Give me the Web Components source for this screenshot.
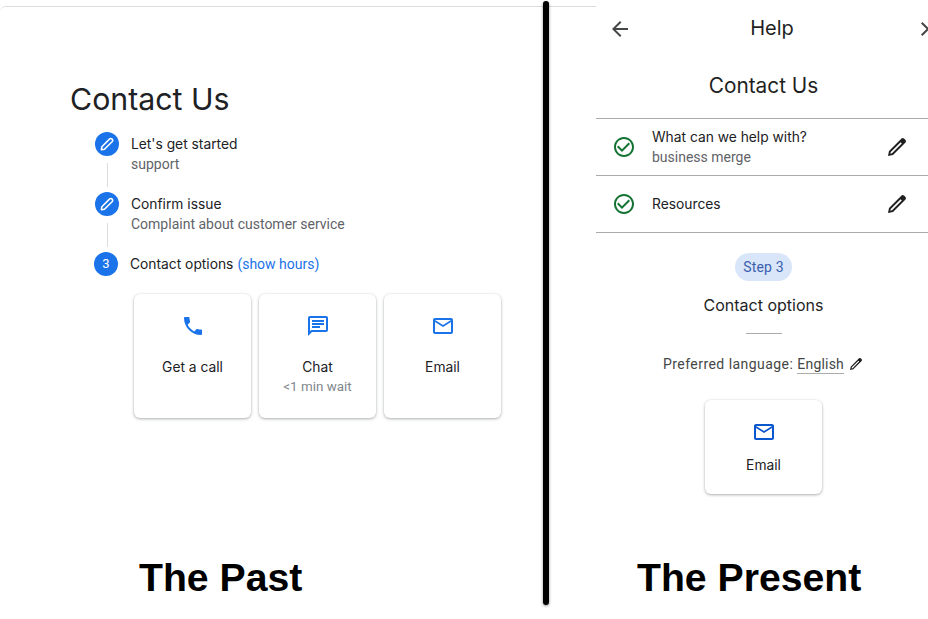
<!DOCTYPE html>
<html lang="en">
<head>
<meta charset="utf-8">
<title>Contact Us</title>
<style>
  html, body { margin: 0; background: #fff; }
</style>
</head>
<body>
<compare-page>
  <past-panel>
    <step-row marker="edit">
      <span slot="title">Let's get started</span>
      <span slot="sub">support</span>
    </step-row>
    <step-row marker="edit">
      <span slot="title">Confirm issue</span>
      <span slot="sub">Complaint about customer service</span>
    </step-row>
    <step-row marker="3" last>
      <span slot="title">Contact options</span>
      <span slot="extra">(show hours)</span>
    </step-row>
    <option-card slot="cards" icon="phone">Get a call</option-card>
    <option-card slot="cards" icon="chat">Chat<span slot="sub">&lt;1 min wait</span></option-card>
    <option-card slot="cards" icon="mail">Email</option-card>
  </past-panel>
  <present-panel>
    <done-row>What can we help with?<span slot="sub">business merge</span></done-row>
    <done-row>Resources</done-row>
  </present-panel>
</compare-page>

<script>
  const ICONS = {
    phone: 'M6.62 10.79c1.44 2.83 3.76 5.14 6.59 6.59l2.2-2.2c.27-.27.67-.36 1.02-.24 1.12.37 2.33.57 3.57.57.55 0 1 .45 1 1V20c0 .55-.45 1-1 1-9.39 0-17-7.61-17-17 0-.55.45-1 1-1h3.5c.55 0 1 .45 1 1 0 1.25.2 2.45.57 3.57.11.35.03.74-.25 1.02l-2.2 2.2z',
    chat: 'M20 2H4c-1.1 0-2 .9-2 2v18l4-4h14c1.1 0 2-.9 2-2V4c0-1.1-.9-2-2-2zm0 14H5.17L4 17.17V4h16v12zM6 12h8v2H6zM6 9h12v2H6zM6 6h12v2H6z',
    mail: 'M22 6c0-1.1-.9-2-2-2H4c-1.1 0-2 .9-2 2v12c0 1.1.9 2 2 2h16c1.1 0 2-.9 2-2V6zm-2 0l-8 5-8-5h16zm0 12H4V8l8 5 8-5v10z',
    pencil: 'M3 21L4 16 16.5 3.5Q17.7 2.4 19 3.5L20.5 5Q21.6 6.3 20.5 7.5L8 20ZM5.3 18.7L7 18.2 16.8 8.4 15.6 7.2 5.8 17Z',
    check: 'M16.59 7.58L10 14.17l-3.59-3.58L5 12l5 5 8-8zM12 2C6.48 2 2 6.48 2 12s4.48 10 10 10 10-4.48 10-10S17.52 2 12 2zm0 18c-4.42 0-8-3.58-8-8s3.58-8 8-8 8 3.58 8 8-3.58 8-8 8z',
    back: 'M20 11H7.83l5.59-5.59L12 4l-8 8 8 8 1.41-1.41L7.83 13H20v-2z',
    close: 'M19 6.41L17.59 5 12 10.59 6.41 5 5 6.41 10.59 12 5 17.59 6.41 19 12 13.41 17.59 19 19 17.59 13.41 12z'
  };

  const TITLE_FONT = 'Inter, "Liberation Sans", sans-serif';
  const BODY_FONT = 'Roboto, "Liberation Sans", sans-serif';

  function icon(name, size = 24) {
    return `<svg width="${size}" height="${size}" viewBox="0 0 24 24" fill="currentColor" fill-rule="evenodd" aria-hidden="true"><path d="${ICONS[name]}"/></svg>`;
  }

  // hollow white capsule used inside the blue step markers
  function capsule() {
    return `<svg width="18" height="18" viewBox="0 0 24 24" fill="none" stroke="currentColor" stroke-width="2.1" stroke-linejoin="round" aria-hidden="true"><path d="M4.5 19.5L5.2 15.6 15.6 5.2a2.5 2.5 0 0 1 3.5 3.5L8.6 19Z"/></svg>`;
  }

  class ComparePage extends HTMLElement {
    constructor() {
      super();
      this.attachShadow({ mode: 'open' }).innerHTML = `
        <style>
          :host { display: flex; position: relative; width: 928px; height: 619px; overflow: hidden; background: #fff; }
          .bar {
            position: absolute; left: 543px; top: 1px; width: 6px; height: 604px;
            background: #000; border-radius: 3px; box-shadow: 0 1px 3px rgba(0,0,0,.45);
          }
        </style>
        <slot></slot>
        <div class="bar"></div>
      `;
    }
  }

  class PastPanel extends HTMLElement {
    constructor() {
      super();
      this.attachShadow({ mode: 'open' }).innerHTML = `
        <style>
          :host { display: flex; flex-direction: column; flex: 0 0 596px; height: 619px; box-sizing: border-box; padding-top: 6px; }
          .sheet { border-top: 1px solid #dadce0; border-top-left-radius: 6px; padding-left: 70px; }
          h1 { margin: 74px 0 0; height: 51px; font: 400 30.3px/37px ${TITLE_FONT}; color: #202124; }
          .steps { display: flex; flex-direction: column; margin-left: 25px; }
          .cards { display: flex; gap: 8px; margin-left: 64px; }
          .caption { margin: auto 0 18px 139px; font: 700 39.2px/46px "Liberation Sans", Arial, sans-serif; color: #000; }
        </style>
        <div class="sheet">
          <h1>Contact Us</h1>
          <div class="steps"><slot></slot></div>
          <div class="cards"><slot name="cards"></slot></div>
        </div>
        <div class="caption">The Past</div>
      `;
    }
  }

  class StepRow extends HTMLElement {
    constructor() {
      super();
      const marker = this.getAttribute('marker');
      const last = this.hasAttribute('last');
      this.attachShadow({ mode: 'open' }).innerHTML = `
        <style>
          :host { display: flex; gap: 12px; height: ${last ? 42 : 60}px; ${last ? 'margin-left: -1px;' : ''} }
          .rail { display: flex; flex-direction: column; align-items: center; width: 24px; }
          .dot {
            display: flex; align-items: center; justify-content: center; width: 24px; height: 24px;
            border-radius: 50%; background: #1a73e8; color: #fff; font: 400 13px/24px ${BODY_FONT};
          }
          .line { width: 1px; height: 24px; margin-top: 7px; background: #dadce0; }
          .text { padding-top: 2px; }
          .title { font: 400 13.8px/20px ${TITLE_FONT}; color: #202124; }
          .sub { font: 400 14px/20px ${BODY_FONT}; color: #5f6368; }
          .extra { font: 400 14px/20px ${BODY_FONT}; color: #1a73e8; }
        </style>
        <div class="rail">
          <div class="dot">${marker === 'edit' ? capsule() : marker}</div>
          ${last ? '' : '<div class="line"></div>'}
        </div>
        <div class="text">
          <div><span class="title"><slot name="title"></slot></span> <span class="extra"><slot name="extra"></slot></span></div>
          <div class="sub"><slot name="sub"></slot></div>
        </div>
      `;
    }
  }

  class OptionCard extends HTMLElement {
    constructor() {
      super();
      this.attachShadow({ mode: 'open' }).innerHTML = `
        <style>
          :host {
            display: flex; flex-direction: column; align-items: center; box-sizing: border-box;
            width: 117px; height: var(--card-height, 124px); padding-top: 20px;
            border-radius: 6px; background: #fff;
            box-shadow: 0 1px 3px rgba(60,64,67,.42), 0 0 2px rgba(60,64,67,.05);
            color: var(--icon-color, #1a73e8);
          }
          svg { display: block; flex: none; }
          .label { margin-top: var(--label-gap, 19px); font: 400 13.8px/20px ${TITLE_FONT}; color: #202124; }
          .sub { font: 400 13.4px/20px ${BODY_FONT}; color: #80868b; }
        </style>
        ${icon(this.getAttribute('icon'))}
        <div class="label"><slot></slot></div>
        <div class="sub"><slot name="sub"></slot></div>
      `;
    }
  }

  class DoneRow extends HTMLElement {
    constructor() {
      super();
      this.attachShadow({ mode: 'open' }).innerHTML = `
        <style>
          :host {
            display: flex; align-items: center; box-sizing: border-box; height: 57px;
            padding: 0 19px 0 16px; border-top: 1px solid #ababab;
            font: 400 13.8px/20px ${TITLE_FONT}; color: #202124;
          }
          .check { color: #137333; margin-right: 16px; height: 24px; }
          .text { flex: 1; }
          .sub { font: 400 14px/20px ${BODY_FONT}; color: #5f6368; }
          .pen { color: #1f1f1f; height: 24px; }
        </style>
        <div class="check">${icon('check')}</div>
        <div class="text">
          <div><slot></slot></div>
          <div class="sub"><slot name="sub"></slot></div>
        </div>
        <div class="pen">${icon('pencil')}</div>
      `;
    }
  }

  class PresentPanel extends HTMLElement {
    constructor() {
      super();
      this.attachShadow({ mode: 'open' }).innerHTML = `
        <style>
          :host { display: flex; flex-direction: column; flex: 0 0 332px; height: 619px; overflow: hidden; }
          .top { display: flex; flex: none; align-items: center; justify-content: space-between; box-sizing: border-box; width: 344px; height: 58px; padding-left: 12px; color: #444746; }
          .top svg { display: block; }
          .top span { margin: -2px 4px 0 0; font: 400 20px/28px ${TITLE_FONT}; color: #1f1f1f; }
          .body { display: flex; flex-direction: column; flex: none; align-items: center; width: 335px; }
          h2 { margin: 0 0 4px; height: 56px; font: 400 20.8px/56px ${TITLE_FONT}; color: #1f1f1f; }
          .rows { align-self: stretch; width: 332px; border-bottom: 1px solid #ababab; }
          .pill { margin-top: 20px; padding: 0 8px; height: 28px; border-radius: 14px; background: #d9e5f9; font: 400 14px/28px ${BODY_FONT}; letter-spacing: .2px; color: #3b5fae; }
          h3 { margin: 12px 0 0; height: 24px; font: 400 16px/24px ${TITLE_FONT}; color: #1f1f1f; }
          .rule { margin-top: 16px; width: 36px; height: 1px; background: #ababab; }
          .lang { display: flex; align-items: flex-start; margin-top: 20px; height: 20px; font: 400 14px/20px ${BODY_FONT}; letter-spacing: .45px; color: #444746; }
          .lang u { margin-left: 4px; height: 19px; text-decoration: none; letter-spacing: .2px; border-bottom: 1px solid #ababab; }
          .lang svg { margin: 2px 0 0 4px; color: #1f1f1f; }
          option-card { margin-top: 26px; --card-height: 94px; --icon-color: #0b57d0; --label-gap: 11px; }
          .caption { margin: auto 0 18px 41px; font: 700 39.2px/46px "Liberation Sans", Arial, sans-serif; color: #000; }
        </style>
        <div class="top">${icon('back')}<span>Help</span>${icon('close')}</div>
        <div class="body">
          <h2>Contact Us</h2>
          <div class="rows"><slot></slot></div>
          <div class="pill">Step 3</div>
          <h3>Contact options</h3>
          <div class="rule"></div>
          <div class="lang">Preferred language: <u>English</u>${icon('pencil', 16)}</div>
          <option-card icon="mail">Email</option-card>
        </div>
        <div class="caption">The Present</div>
      `;
    }
  }

  customElements.define('compare-page', ComparePage);
  customElements.define('past-panel', PastPanel);
  customElements.define('step-row', StepRow);
  customElements.define('option-card', OptionCard);
  customElements.define('done-row', DoneRow);
  customElements.define('present-panel', PresentPanel);
</script>
</body>
</html>
